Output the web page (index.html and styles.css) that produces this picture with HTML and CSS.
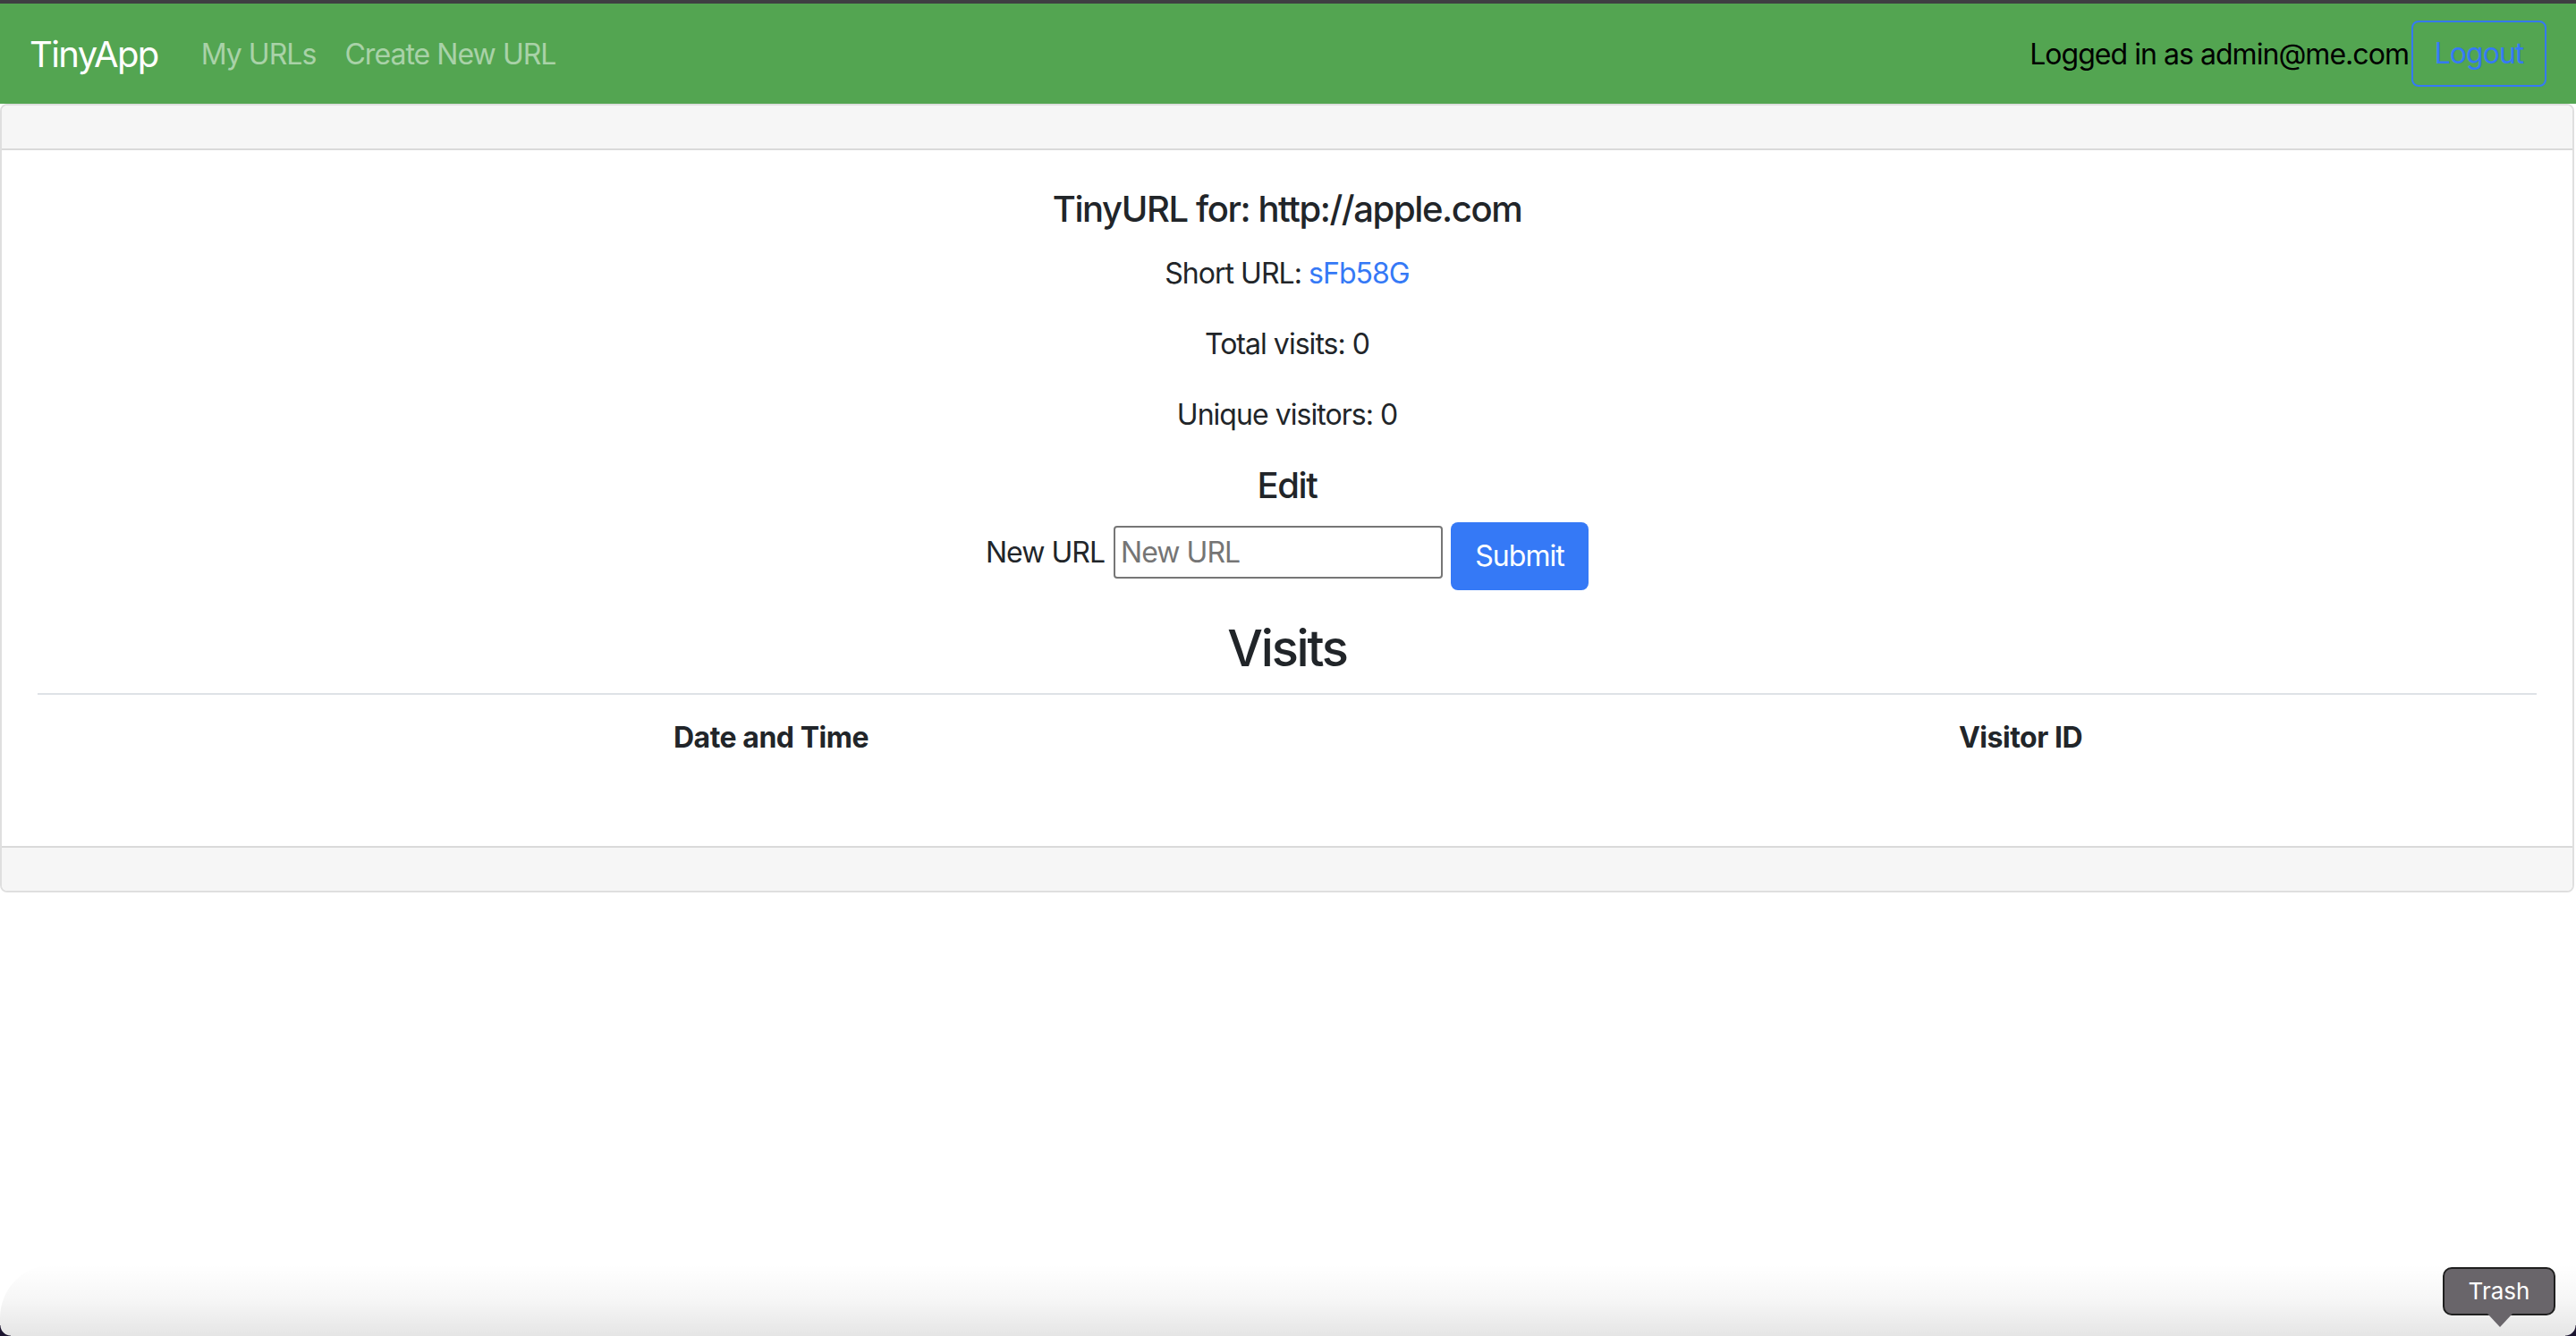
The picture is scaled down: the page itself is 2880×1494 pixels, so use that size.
FILE: index.html
```html
<!DOCTYPE html>
<html lang="en">
<head>
<meta charset="utf-8">
<title>TinyApp</title>
<link rel="stylesheet" href="styles.css">
</head>
<body>
<div class="topstrip"></div>
<nav class="navbar">
  <a class="brand" href="#">TinyApp</a>
  <ul class="nav-links">
    <li><a class="nav-link" href="#">My URLs</a></li>
    <li><a class="nav-link" href="#">Create New URL</a></li>
  </ul>
  <div class="nav-right">
    <span class="logged">Logged in as admin@me.com</span>
    <button class="btn-outline" type="button">Logout</button>
  </div>
</nav>
<main class="card">
  <div class="card-header"></div>
  <div class="card-body">
    <h5 class="card-title">TinyURL for: http://apple.com</h5>
    <p class="info">Short URL: <a class="short-link" href="#">sFb58G</a></p>
    <p class="info">Total visits: 0</p>
    <p class="info">Unique visitors: 0</p>
    <h5 class="edit-title">Edit</h5>
    <form class="edit-form">
      <label class="form-label" for="newurl">New URL</label>
      <input class="form-input" id="newurl" type="text" placeholder="New URL">
      <button class="btn-primary" type="submit">Submit</button>
    </form>
    <h3 class="visits-title">Visits</h3>
    <table class="visits-table">
      <thead>
        <tr>
          <th class="col-date">Date and Time</th>
          <th class="col-visitor">Visitor ID</th>
        </tr>
      </thead>
      <tbody></tbody>
    </table>
  </div>
  <div class="card-footer"></div>
</main>
<div class="dock-shadow"></div>
<div class="dock-corner left"></div>
<div class="dock-corner right"></div>
<div class="tooltip">Trash</div>
</body>
</html>
```

FILE: styles.css
```css
* { box-sizing: border-box; }
html, body {
  margin: 0;
  padding: 0;
  background: #ffffff;
}
body {
  width: 2880px;
  height: 1494px;
  overflow: hidden;
  position: relative;
  font-family: Inter, "Noto Sans", "Liberation Sans", sans-serif;
  font-size: 32px;
  line-height: 48px;
  letter-spacing: -0.03em;
  color: #212529;
}
.topstrip {
  height: 4px;
  background: #3e3f42;
}
.navbar {
  height: 112px;
  background: #53a551;
  display: flex;
  align-items: center;
  padding: 2px 33px 0 33px;
}
.brand {
  font-size: 40px;
  line-height: 60px;
  color: #ffffff;
  text-decoration: none;
  margin-right: 32px;
  letter-spacing: -0.04em;
}
.nav-links {
  display: flex;
  list-style: none;
  margin: 0;
  padding: 0;
}
.nav-link {
  display: block;
  padding: 0 16px;
  color: rgba(255, 255, 255, 0.5);
  text-decoration: none;
  font-size: 32px;
  line-height: 48px;
}
.nav-right {
  margin-left: auto;
  display: flex;
  align-items: center;
}
.logged {
  color: #000000;
  font-size: 32px;
  margin-right: 3px;
}
.btn-outline {
  height: 74px;
  width: 151px;
  margin-top: -2px;
  padding: 0;
  border: 2px solid #3579f6;
  border-radius: 8px;
  background: transparent;
  color: #3579f6;
  font-family: inherit;
  font-size: 32px;
  line-height: 48px;
  letter-spacing: -0.03em;
}
.card {
  display: block;
  margin: 0 2px 0 0;
  border: 2px solid #dfdfdf;
  border-radius: 8px;
  overflow: hidden;
}
.card-header {
  height: 50px;
  background: #f6f6f6;
  border-bottom: 2px solid #dadada;
}
.card-footer {
  height: 50px;
  background: #f6f6f6;
  border-top: 2px solid #dadada;
}
.card-body {
  padding: 42px 40px 40px;
  text-align: center;
}
.card-title, .edit-title {
  font-size: 40px;
  line-height: 48px;
  font-weight: 500;
  margin: 0 0 24px;
  letter-spacing: -0.035em;
}
.edit-title {
  margin-bottom: 17px;
}
.info {
  margin: 0 0 31px;
}
.short-link {
  color: #3579f6;
  text-decoration: none;
}
.edit-form {
  display: flex;
  justify-content: center;
  align-items: flex-start;
  height: 76px;
  margin: 0 0 32px;
}
.form-label {
  margin-top: 10px;
  margin-right: 10px;
}
.form-input {
  margin-top: 4px;
  width: 368px;
  height: 59px;
  border: 2px solid #767676;
  border-radius: 4px;
  padding: 0 6px;
  font-family: inherit;
  font-size: 32px;
  letter-spacing: -0.03em;
  color: #212529;
  margin-right: 9px;
}
.form-input::placeholder {
  color: #757575;
}
.btn-primary {
  height: 76px;
  width: 154px;
  padding: 0;
  border: none;
  border-radius: 8px;
  background: #3579f6;
  color: #ffffff;
  font-family: inherit;
  font-size: 32px;
  line-height: 48px;
  letter-spacing: -0.03em;
}
.visits-title {
  font-size: 56px;
  line-height: 67px;
  font-weight: 500;
  margin: 0 0 16px;
  letter-spacing: -0.04em;
}
.visits-table {
  width: 100%;
  border-collapse: collapse;
  margin-bottom: 33px;
}
.visits-table th {
  border-top: 2px solid #dee2e6;
  padding: 24px;
  font-weight: 700;
  text-align: center;
  letter-spacing: -0.015em;
}
.col-date { width: 1640px; }
.dock-shadow {
  position: absolute;
  left: 0;
  right: 0;
  bottom: 0;
  height: 80px;
  border-radius: 60px 0 0 0;
  background: linear-gradient(to bottom, rgba(0, 0, 0, 0), rgba(0, 0, 0, 0.035) 50%, rgba(0, 0, 0, 0.1));
}
.dock-corner {
  position: absolute;
  bottom: 0;
  width: 12px;
  height: 12px;
  background: #1c1530;
}
.dock-corner.left {
  left: 0;
  -webkit-mask: radial-gradient(circle at 12px 0, transparent 11px, #000 12px);
  mask: radial-gradient(circle at 12px 0, transparent 11px, #000 12px);
}
.dock-corner.right {
  right: 0;
  -webkit-mask: radial-gradient(circle at 0 0, transparent 11px, #000 12px);
  mask: radial-gradient(circle at 0 0, transparent 11px, #000 12px);
}
.tooltip {
  position: absolute;
  left: 2731px;
  top: 1417px;
  width: 126px;
  height: 54px;
  background: #69656a;
  border: 2px solid #1f1f1f;
  border-radius: 10px;
  color: #ffffff;
  font-size: 26px;
  line-height: 50px;
  letter-spacing: 0;
  text-align: center;
}
.tooltip::after {
  content: "";
  position: absolute;
  left: 48px;
  top: 50px;
  width: 0;
  height: 0;
  border-left: 14px solid transparent;
  border-right: 14px solid transparent;
  border-top: 15px solid #69656a;
}
```
